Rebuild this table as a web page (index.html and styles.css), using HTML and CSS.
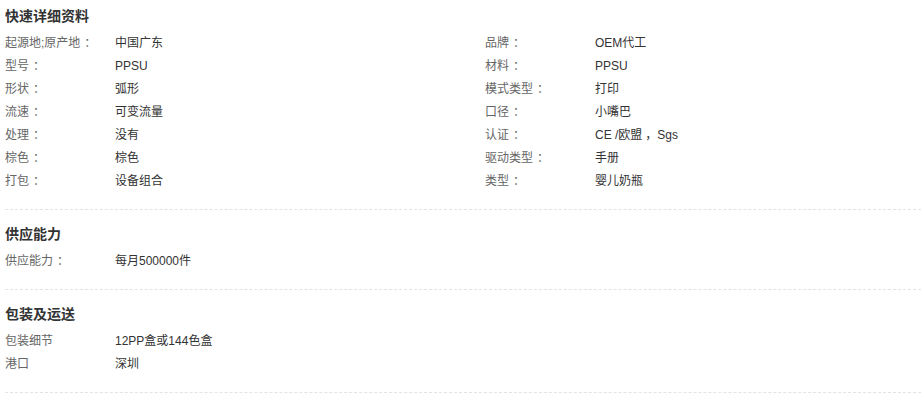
FILE: index.html
```html
<!DOCTYPE html>
<html lang="zh-CN">
<head>
<meta charset="utf-8">
<title>快速详细资料</title>
<link rel="stylesheet" href="styles.css">
</head>
<body>
<div class="page">
  <section class="block first">
    <h3 class="title">快速详细资料</h3>
    <div class="grid pairs">
      <div class="lbl">起源地;原产地<span class="p">：</span></div><div class="val">中国广东</div>
      <div class="lbl">品牌<span class="p">：</span></div><div class="val">OEM代工</div>
      <div class="lbl">型号<span class="p">：</span></div><div class="val">PPSU</div>
      <div class="lbl">材料<span class="p">：</span></div><div class="val">PPSU</div>
      <div class="lbl">形状<span class="p">：</span></div><div class="val">弧形</div>
      <div class="lbl">模式类型<span class="p">：</span></div><div class="val">打印</div>
      <div class="lbl">流速<span class="p">：</span></div><div class="val">可变流量</div>
      <div class="lbl">口径<span class="p">：</span></div><div class="val">小嘴巴</div>
      <div class="lbl">处理<span class="p">：</span></div><div class="val">没有</div>
      <div class="lbl">认证<span class="p">：</span></div><div class="val">CE /欧盟<span class="pc">，</span>Sgs</div>
      <div class="lbl">棕色<span class="p">：</span></div><div class="val">棕色</div>
      <div class="lbl">驱动类型<span class="p">：</span></div><div class="val">手册</div>
      <div class="lbl">打包<span class="p">：</span></div><div class="val">设备组合</div>
      <div class="lbl">类型<span class="p">：</span></div><div class="val">婴儿奶瓶</div>
    </div>
  </section>
  <section class="block">
    <h3 class="title">供应能力</h3>
    <div class="grid single">
      <div class="lbl">供应能力<span class="p">：</span></div><div class="val">每月500000件</div>
    </div>
  </section>
  <section class="block">
    <h3 class="title">包装及运送</h3>
    <div class="grid single">
      <div class="lbl">包装细节</div><div class="val">12PP盒或144色盒</div>
      <div class="lbl">港口</div><div class="val">深圳</div>
    </div>
  </section>
</div>
</body>
</html>
```
FILE: styles.css
```css
html, body {
  margin: 0;
  padding: 0;
  background: #fff;
}
body {
  font-family: "Liberation Sans", "Noto Sans CJK SC", sans-serif;
  font-size: 12px;
  color: #333;
}
.page {
  margin-left: 5px;
}
.block {
  padding: 14px 0 16px;
  border-bottom: 1px dashed #e3e3e3;
}
.block.first {
  padding-top: 6px;
}
.title {
  margin: 0 0 6px;
  font-size: 14px;
  line-height: 20px;
  font-weight: bold;
  color: #333;
}
.grid {
  display: grid;
  line-height: 23px;
}
.pairs {
  grid-template-columns: 110px 370px 110px 1fr;
}
.single {
  grid-template-columns: 110px 1fr;
}
.lbl {
  color: #666;
  white-space: nowrap;
}
.val {
  color: #333;
  white-space: nowrap;
}
.p {
  padding-left: 4px;
  margin-right: -4px;
}
.pc {
  padding-left: 3px;
}
```
